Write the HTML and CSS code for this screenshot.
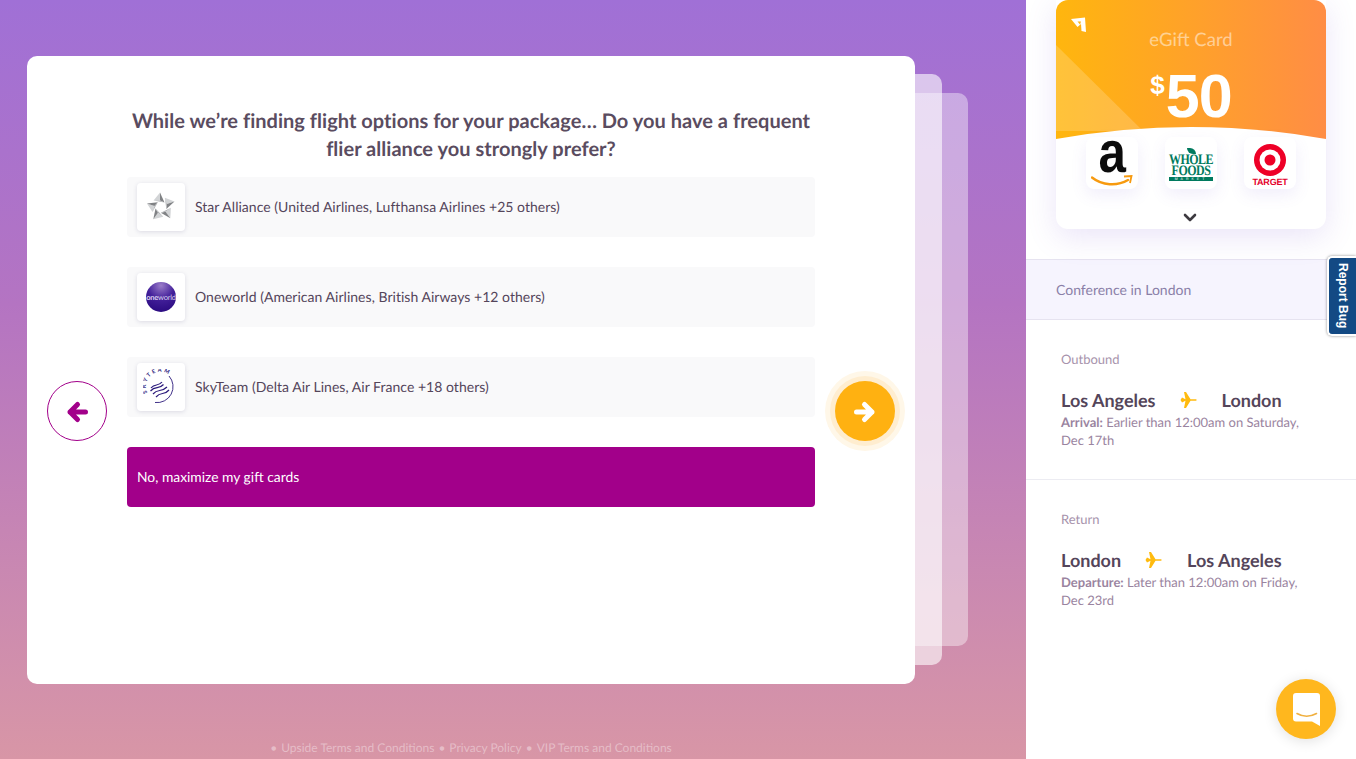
FILE: index.html
```html
<!DOCTYPE html>
<html lang="en">
<head>
<meta charset="utf-8">
<title>Upside</title>
<link rel="stylesheet" href="styles.css">
</head>
<body>
<div class="page">
  <main class="stage">
    <div class="sheet sheet-back"></div>
    <div class="sheet sheet-mid"></div>
    <section class="card">
      <div class="nav-col">
        <button class="nav nav-prev" aria-label="Back">
          <svg class="arrow" width="24" height="24" viewBox="0 0 24 24"><path d="M20.500 12H5M12.500 4.500 5 12l7.500 7.500" fill="none" stroke="#a2008a" stroke-width="5" stroke-linecap="round" stroke-linejoin="round"/></svg>
        </button>
      </div>
      <div class="content">
        <h1 class="question">While we’re finding flight options for your package… Do you have a frequent flier alliance you strongly prefer?</h1>
        <div class="option">
          <span class="logo">
            <svg width="32" height="32" viewBox="0 0 32 32">
              <defs>
                <g id="star-arm"><path d="M15 1.500 8.500 9.500 15 9.500z" fill="#d2d4d6"/><path d="M15 1.500V9.500L19.500 11.500z" fill="#808285"/><path d="M8.500 9.500H15L19.500 11.500z" fill="#b0b2b5"/></g>
              </defs>
              <use href="#star-arm"/>
              <use href="#star-arm" transform="rotate(72 16 16)"/>
              <use href="#star-arm" transform="rotate(144 16 16)"/>
              <use href="#star-arm" transform="rotate(216 16 16)"/>
              <use href="#star-arm" transform="rotate(288 16 16)"/>
            </svg>
          </span>
          <span class="option-text">Star Alliance (United Airlines, Lufthansa Airlines +25 others)</span>
        </div>
        <div class="option">
          <span class="logo">
            <svg width="32" height="32" viewBox="0 0 32 32">
              <defs><radialGradient id="globe" cx="50%" cy="12%" r="90%"><stop offset="0" stop-color="#9a7cc9"/><stop offset=".5" stop-color="#43209a"/><stop offset="1" stop-color="#2a0a80"/></radialGradient></defs>
              <circle cx="16" cy="16" r="15" fill="url(#globe)"/>
              <text x="16" y="18.500" class="ow-text" text-anchor="middle"><tspan font-weight="700">one</tspan>world</text>
            </svg>
          </span>
          <span class="option-text">Oneworld (American Airlines, British Airways +12 others)</span>
        </div>
        <div class="option">
          <span class="logo">
            <svg width="36" height="36" viewBox="0 0 36 36">
              <defs><path id="arc" d="M4.500 24A14.500 14.500 0 0 1 25 5"/></defs>
              <text class="st-text"><textPath href="#arc">SKYTEAM</textPath></text>
              <path d="M26 7A16 16 0 0 1 12 33.500" fill="none" stroke="#2b1a7c" stroke-width=".9"/>
              <path d="M7.500 22c5-6 8-1 13-6.500M10 25c5-6 8-1 14-7M13 28c5-6 8-1 13-7M8 19c4-5 7-1 11-6" fill="none" stroke="#2b1a7c" stroke-width="1.200"/>
            </svg>
          </span>
          <span class="option-text">SkyTeam (Delta Air Lines, Air France +18 others)</span>
        </div>
        <div class="option option-selected">
          <span class="option-text">No, maximize my gift cards</span>
        </div>
      </div>
      <div class="nav-col">
        <button class="nav nav-next" aria-label="Next">
          <svg class="arrow" width="24" height="24" viewBox="0 0 24 24"><path d="M3.500 12H19M11.500 4.500 19 12l-7.500 7.500" fill="none" stroke="#fff" stroke-width="5" stroke-linecap="round" stroke-linejoin="round"/></svg>
        </button>
      </div>
    </section>
    <footer class="legal">
      <span>Upside Terms and Conditions</span>
      <span>Privacy Policy</span>
      <span>VIP Terms and Conditions</span>
    </footer>
  </main>

  <aside class="side">
    <div class="gift">
      <div class="gift-head">
        <svg class="gift-shape" width="270" height="140" viewBox="0 0 270 140">
          <path d="M0 45 87 131H0z" fill="#fff" fill-opacity=".18"/>
          <path d="M0 139Q135 115 270 139V140H0z" fill="#fff"/>
        </svg>
        <svg class="gift-mark" width="15" height="15" viewBox="0 0 15 15"><path d="M0 2 14 0.500 15 15 10.500 14 10 7 6.500 10z" fill="#fff"/><path d="M6.500 4.500 10 4.500 9 7.500z" fill="#ffb311"/></svg>
        <div class="gift-title">eGift Card</div>
        <div class="gift-amount"><sup class="gift-currency">$</sup>50</div>
      </div>
      <div class="brands">
        <span class="brand">
          <span class="amazon-a">a</span>
          <svg class="amazon-smile" width="42" height="14" viewBox="0 0 42 14"><path d="M1 2.500c10 8 25 9 36 2.500" fill="none" stroke="#f79a0f" stroke-width="2.400" stroke-linecap="round"/><path d="M33 1.500 40.500 1 39 8" fill="none" stroke="#f79a0f" stroke-width="1.800"/></svg>
        </span>
        <span class="brand brand-wf">
          <span class="wf-leaf"></span>
          <span class="wf-word">WHOLE</span>
          <span class="wf-word">FOODS</span>
          <span class="wf-bar">MARKET</span>
        </span>
        <span class="brand brand-target">
          <svg width="32" height="32" viewBox="0 0 32 32"><circle cx="16" cy="16" r="16" fill="#ee0027"/><circle cx="16" cy="16" r="10.500" fill="#fff"/><circle cx="16" cy="16" r="5.500" fill="#ee0027"/></svg>
          <span class="target-word">TARGET</span>
        </span>
      </div>
      <svg class="chev" width="14" height="9" viewBox="0 0 14 9"><path d="M2 2l5 5 5-5" fill="none" stroke="#3d3a40" stroke-width="2.600" stroke-linecap="round" stroke-linejoin="round"/></svg>
    </div>

    <div class="trip-name">Conference in London</div>

    <section class="leg">
      <div class="leg-label">Outbound</div>
      <div class="route">
        <span>Los Angeles</span>
        <svg width="18" height="18" viewBox="0 0 18 18"><path d="M0.500 9 2 6.500 5.500 8.200 4 1 6 1 10.500 8.200 16 8.200Q17.800 9 16 9.800L10.500 9.800 6 17 4 17 5.500 9.800 2 11.500z" fill="#ffbb0f"/></svg>
        <span>London</span>
      </div>
      <p class="leg-note"><b>Arrival:</b> Earlier than 12:00am on Saturday, Dec 17th</p>
    </section>

    <section class="leg leg-return">
      <div class="leg-label">Return</div>
      <div class="route">
        <span>London</span>
        <svg width="18" height="18" viewBox="0 0 18 18"><path d="M0.500 9 2 6.500 5.500 8.200 4 1 6 1 10.500 8.200 16 8.200Q17.800 9 16 9.800L10.500 9.800 6 17 4 17 5.500 9.800 2 11.500z" fill="#ffbb0f"/></svg>
        <span>Los Angeles</span>
      </div>
      <p class="leg-note"><b>Departure:</b> Later than 12:00am on Friday, Dec 23rd</p>
    </section>

    <button class="report">Report Bug</button>
    <button class="chat" aria-label="Chat">
      <svg width="27" height="33" viewBox="0 0 27 33"><path d="M3 0h21a3 3 0 0 1 3 3v30l-8-4.500H3a3 3 0 0 1-3-3V3a3 3 0 0 1 3-3z" fill="#fff"/><path d="M4 20.500Q13.500 26 23.500 20.500" fill="none" stroke="#f0b040" stroke-width="1.600" stroke-linecap="round"/></svg>
    </button>
  </aside>
</div>
</body>
</html>
```
FILE: styles.css
```css
* { box-sizing: border-box; }
html, body { margin: 0; height: 100%; }
body { font-family: "Lato", "Noto Sans", sans-serif; color: #54455a; background: #fff; overflow: hidden; text-rendering: geometricPrecision; }
button { border: 0; padding: 0; font: inherit; cursor: pointer; }

.page { display: flex; width: 1356px; height: 759px; }

.stage {
  position: relative;
  flex: 0 0 1026px;
  padding: 56px 0 0 27px;
  background: linear-gradient(180deg, #a070d6 0%, #b474c2 40%, #d896a6 100%);
}
.sheet { position: absolute; border-radius: 10px; }
.sheet-back { left: 120px; top: 93px; width: 848px; height: 553px; background: rgba(255,255,255,.4); }
.sheet-mid { left: 120px; top: 74px; width: 822px; height: 591px; background: rgba(255,255,255,.6); }

.card {
  position: relative;
  display: flex;
  gap: 20px;
  width: 888px;
  height: 628px;
  padding: 0 20px;
  background: #fff;
  border-radius: 10px;
}
.nav-col { flex: 0 0 60px; padding-top: 325px; }
.nav { display: flex; align-items: center; justify-content: center; width: 60px; height: 60px; border-radius: 50%; background: #fff; }
.arrow { margin-top: 2px; }
.nav-prev { border: 1px solid #a2008a; }
.nav-next { background: #ffb111; box-shadow: 0 0 0 5px #ffedcf, 0 0 0 10px #fff7e8; }

.content { flex: 0 0 688px; display: flex; flex-direction: column; gap: 30px; }
.question { margin: 51px 0 -16px; font-size: 20px; line-height: 28px; font-weight: 700; letter-spacing: .03px; text-align: center; color: #5a4c60; }
.option { display: flex; align-items: center; gap: 10px; height: 60px; padding: 0 10px; background: #f9f9fa; border-radius: 4px; font-size: 14px; letter-spacing: .03px; color: #54455a; }
.option-text { margin-top: -2px; }
.option-selected { background: #a2008a; color: #fff; font-size: 13.850px; letter-spacing: 0; }
.logo { display: flex; align-items: center; justify-content: center; flex: 0 0 48px; height: 48px; background: #fff; border-radius: 4px; box-shadow: 0 1px 4px rgba(70,60,110,.16); }
.ow-text { font-size: 7.500px; fill: #d9d0ee; letter-spacing: -.2px; font-family: "Lato", sans-serif; }
.st-text { font-size: 5.500px; font-weight: 700; fill: #2b1a7c; letter-spacing: 2px; font-family: "Lato", sans-serif; }

.legal { display: flex; justify-content: center; gap: 4px; width: 888px; margin-top: 57px; font-size: 12px; line-height: 14px; color: rgba(255,255,255,.38); }
.legal span::before { content: "•"; margin-right: 4px; }

.side { position: relative; flex: 0 0 330px; background: #fff; }

.gift { position: relative; width: 270px; height: 229px; margin-left: 30px; background: #fff; border-radius: 0 0 12px 12px; box-shadow: 0 8px 30px rgba(122,88,214,.16); }
.gift-head {
  position: relative;
  height: 139px;
  padding-top: 27px;
  border-radius: 12px 12px 0 0;
  background: linear-gradient(90deg, #ffb60e 0%, #ff8d45 100%);
  color: #fff;
  text-align: center;
}
.gift-shape { position: absolute; left: 0; top: 0; }
.gift-mark { position: absolute; left: 15px; top: 17px; }
.gift-title { position: relative; font-size: 18.500px; line-height: 24px; color: rgba(255,255,255,.5); }
.gift-amount { position: relative; margin-top: 12px; font-family: "Liberation Sans", sans-serif; font-size: 61px; line-height: 66px; font-weight: 700; letter-spacing: -1px; }
.gift-currency { font-size: 26px; line-height: 0; vertical-align: 23px; margin-right: 2px; }

.brands { display: flex; justify-content: space-between; position: absolute; left: 30px; top: 137px; width: 210px; }
.brand { position: relative; display: flex; flex-direction: column; align-items: center; width: 52px; height: 52px; background: #fff; border-radius: 8px; box-shadow: 0 6px 16px rgba(122,88,214,.1); }
.amazon-a { font-family: "Liberation Sans", sans-serif; font-size: 58px; font-weight: 700; line-height: 32px; color: #0c0c0c; transform: scaleX(.85); }
.amazon-smile { position: absolute; left: 5px; top: 38px; }
.brand-wf { padding-top: 11px; color: #007a5e; font-family: "Liberation Serif", serif; }
.wf-leaf { width: 9px; height: 6px; border-radius: 0 6px 0 6px; background: #007a5e; }
.wf-word { font-size: 12px; line-height: 11px; letter-spacing: -.5px; font-weight: 700; transform: scaleY(1.200); }
.wf-bar { width: 44px; height: 4px; margin-top: 1px; background: #007a5e; color: #fff; font-size: 3.500px; line-height: 4px; letter-spacing: 3px; text-align: center; font-family: "Liberation Sans", sans-serif; overflow: hidden; }
.brand-target { padding-top: 7px; }
.target-word { margin-top: 1px; font-family: "Liberation Sans", sans-serif; font-size: 9px; line-height: 10px; font-weight: 700; color: #e4002b; letter-spacing: -.2px; }
.chev { position: absolute; left: 127px; top: 213px; }

.trip-name { height: 61px; margin-top: 30px; padding-left: 30px; background: #f6f4fe; border-top: 1px solid #e6e3f0; border-bottom: 1px solid #e6e3f0; font-size: 14px; line-height: 59px; color: #8a7fa8; }

.leg { height: 160px; padding: 31px 35px 0; border-bottom: 1px solid #ececf2; }
.leg-return { border-bottom: 0; }
.leg-label { font-size: 13px; line-height: 16px; color: #a793ac; }
.route { display: flex; align-items: center; gap: 24px; margin-top: 21px; font-size: 18px; line-height: 24px; font-weight: 700; color: #54455a; }
.leg-note { margin: 1px 0 0; width: 250px; font-size: 13px; line-height: 18px; color: #9a84a0; }

.report {
  position: absolute;
  right: 0;
  top: 256px;
  width: 29px;
  height: 80px;
  writing-mode: vertical-rl;
  background: #134a84;
  border: 2px solid #fff;
  border-right: 0;
  border-radius: 5px 0 0 5px;
  box-shadow: 0 0 3px rgba(0,0,0,.45);
  color: #fff;
  font-family: "Liberation Sans", sans-serif;
  font-size: 12px;
  font-weight: 700;
  text-align: center;
  line-height: 26px;
}
.chat { position: absolute; left: 250px; top: 679px; display: flex; align-items: center; justify-content: center; width: 60px; height: 60px; border-radius: 50%; background: #ffb71e; box-shadow: 0 2px 14px rgba(0,0,0,.12); }
```
